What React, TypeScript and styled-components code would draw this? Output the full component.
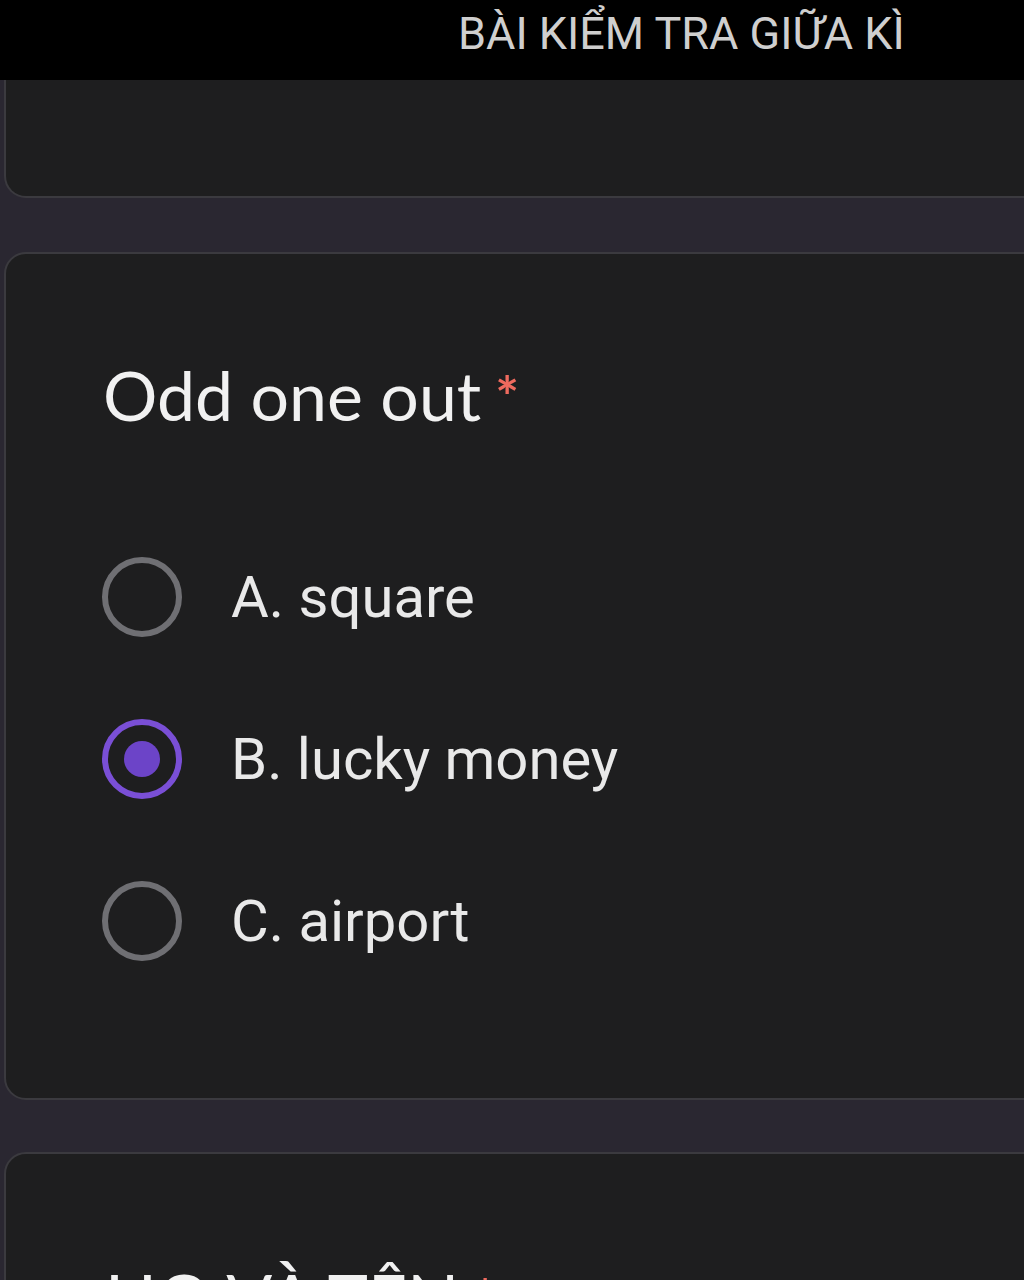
import styled, { createGlobalStyle } from 'styled-components';

const GlobalStyle = createGlobalStyle`
    html, body {
        margin: 0;
        padding: 0;
        background: #2a2731;
        overflow: hidden;
    }
    body {
        font-family: "Roboto", "Liberation Sans", sans-serif;
    }
`;

const Page = styled.div`
    width: 1024px;
    height: 1280px;
    overflow: hidden;
    display: flex;
    flex-direction: column;
`;

const TopBar = styled.header`
    height: 80px;
    flex-shrink: 0;
    background: #000;
    display: flex;
    align-items: center;
    padding-left: 458px;
`;

const TopTitle = styled.h1`
    margin: 0;
    font-family: "Roboto", "Liberation Sans", sans-serif;
    font-weight: 400;
    font-size: 45px;
    line-height: 1;
    color: #cfcfcf;
    white-space: nowrap;
    margin-top: -14px;
`;

const Card = styled.section<{ $cut?: boolean }>`
    flex-shrink: 0;
    margin-left: 4px;
    width: calc(100% + 40px);
    box-sizing: border-box;
    background: #1e1e1f;
    border: 2px solid #3b3a3f;
    border-top: ${p => (p.$cut ? 'none' : '2px solid #3b3a3f')};
    border-radius: ${p => (p.$cut ? '0 0 22px 22px' : '22px')};
`;

const HeadCard = styled(Card)`
    height: 118px;
`;

const QuestionCard = styled(Card)`
    margin-top: 54px;
    height: 848px;
    padding: 101px 0 0 97px;
`;

const NameCard = styled(Card)`
    margin-top: 52px;
    height: 300px;
    padding: 104px 0 0 99px;
`;

const QuestionTitle = styled.h2`
    margin: 0;
    font-family: "Lato", "Open Sans", sans-serif;
    font-weight: 400;
    font-size: 68px;
    line-height: 80px;
    color: #f1f1f1;
    white-space: nowrap;
`;

const Required = styled.span`
    color: #ee6a5e;
    font-weight: 700;
    font-size: 56px;
    margin-left: 14px;
    vertical-align: 4px;
`;

const Options = styled.div`
    margin-top: 80px;
    display: flex;
    flex-direction: column;
`;

const OptionRow = styled.label`
    height: 162px;
    display: flex;
    align-items: center;
    gap: 49px;
    margin-left: -1px;
`;

const Radio = styled.span<{ $checked?: boolean }>`
    width: 68px;
    height: 68px;
    border-radius: 50%;
    border: 6px solid ${p => (p.$checked ? '#7a4fd6' : '#6f6f73')};
    display: flex;
    align-items: center;
    justify-content: center;
    flex-shrink: 0;
`;

const Dot = styled.span`
    width: 36px;
    height: 36px;
    border-radius: 50%;
    background: #6c44c8;
`;

const OptionText = styled.span`
    font-family: "Roboto", "Liberation Sans", sans-serif;
    font-size: 58px;
    color: #e9e9e9;
    white-space: nowrap;
`;

const options = [
    { id: 'a', text: 'A. square' },
    { id: 'b', text: 'B. lucky money', checked: true },
    { id: 'c', text: 'C. airport' },
];

function App() {
    return (
        <Page>
            <GlobalStyle />
            <TopBar>
                <TopTitle>BÀI KIỂM TRA GIỮA KÌ</TopTitle>
            </TopBar>
            <HeadCard $cut />
            <QuestionCard>
                <QuestionTitle>
                    Odd one out<Required>*</Required>
                </QuestionTitle>
                <Options>
                    {options.map(opt => (
                        <OptionRow key={opt.id}>
                            <Radio $checked={opt.checked}>{opt.checked && <Dot />}</Radio>
                            <OptionText>{opt.text}</OptionText>
                        </OptionRow>
                    ))}
                </Options>
            </QuestionCard>
            <NameCard>
                <QuestionTitle>
                    HỌ VÀ TÊN<Required>*</Required>
                </QuestionTitle>
            </NameCard>
        </Page>
    );
}

export default App;
